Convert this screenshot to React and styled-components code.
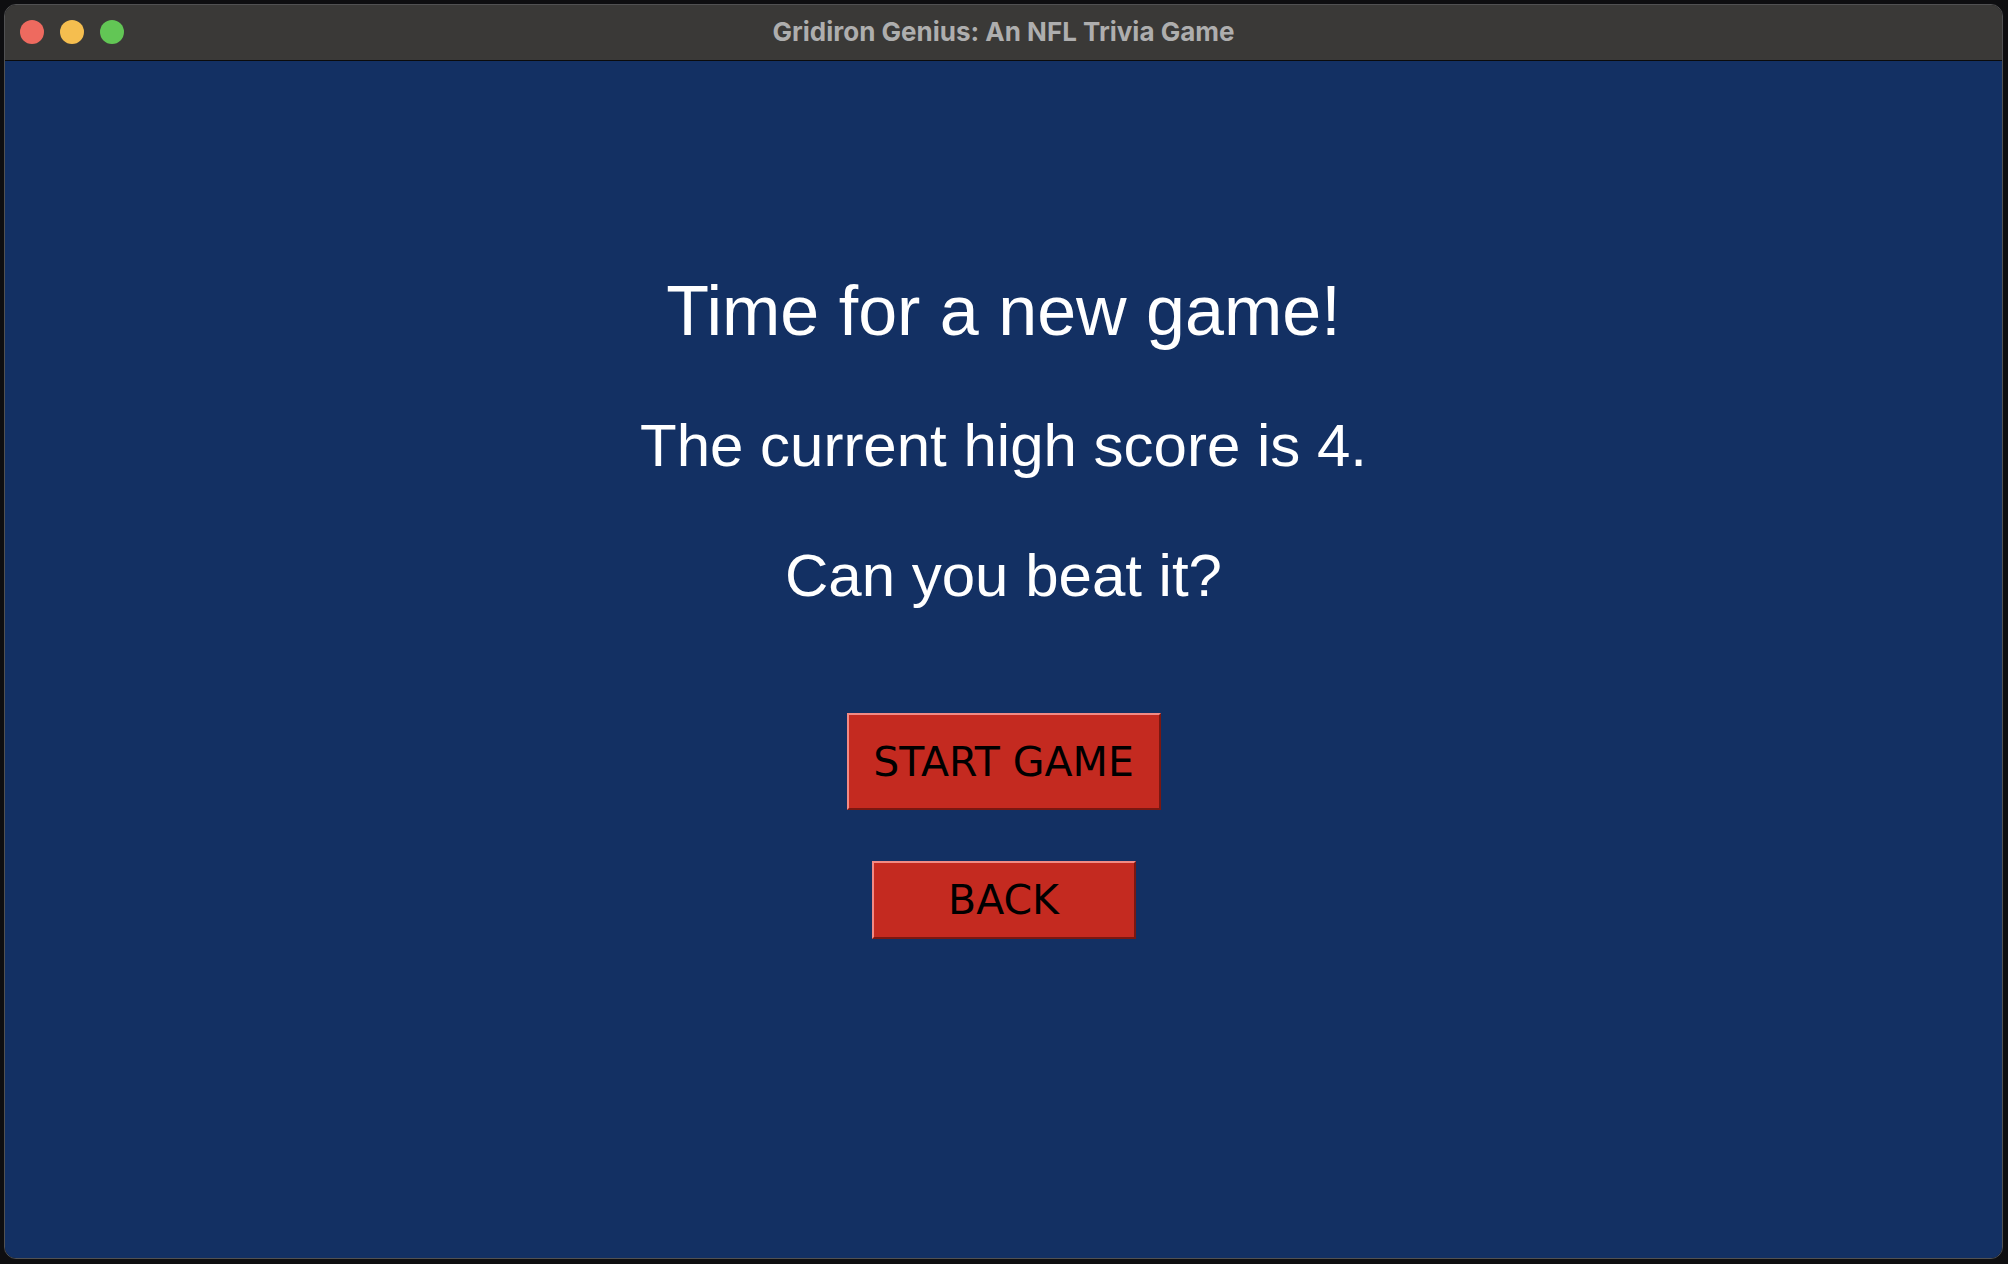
import React from 'react';
import styled, { createGlobalStyle } from 'styled-components';

const GlobalStyle = createGlobalStyle`
  html, body {
    margin: 0;
    padding: 0;
    background: #0e0e10;
  }
  body {
    width: 2008px;
    height: 1264px;
    overflow: hidden;
  }
`;

const Screen = styled.div`
  box-sizing: border-box;
  width: 2008px;
  height: 1264px;
  padding: 4px 5px 5px 4px;
`;

const Window = styled.div`
  box-sizing: border-box;
  height: 100%;
  display: flex;
  flex-direction: column;
  border: 1px solid rgba(255, 255, 255, 0.28);
  border-radius: 12px;
  overflow: hidden;
`;

const TitleBar = styled.div`
  position: relative;
  height: 55px;
  flex: none;
  display: flex;
  align-items: center;
  justify-content: center;
  background: #3a3937;
  border-bottom: 1px solid #0b0b0b;
`;

const Lights = styled.div`
  position: absolute;
  left: 15px;
  top: 15px;
  display: flex;
  gap: 16px;
`;

const Light = styled.span`
  width: 24px;
  height: 24px;
  border-radius: 50%;
  background: ${(p) => p.color};
`;

const Title = styled.div`
  font-family: Inter, 'Noto Sans', sans-serif;
  font-weight: 700;
  font-size: 26px;
  color: #aeaeae;
  margin-top: -2px;
`;

const Content = styled.main`
  flex: 1;
  background: #133063;
  display: flex;
  flex-direction: column;
  align-items: center;
  padding-top: 215px;
`;

const Heading = styled.h1`
  margin: 0;
  font-family: 'Liberation Sans', Arial, sans-serif;
  font-weight: 400;
  font-size: 70px;
  line-height: 70px;
  color: #ffffff;
`;

const Line = styled.p`
  margin: ${(p) => p.top}px 0 0;
  font-family: 'Liberation Sans', Arial, sans-serif;
  font-size: 60px;
  line-height: 60px;
  color: #ffffff;
`;

const Button = styled.button`
  box-sizing: border-box;
  width: ${(p) => p.w}px;
  height: ${(p) => p.h}px;
  margin-top: ${(p) => p.top}px;
  padding: 0;
  background: #c42a20;
  border: 2px solid;
  border-color: #f28a84 #7a1711 #7a1711 #f28a84;
  font-family: 'DejaVu Sans', Verdana, sans-serif;
  font-size: 41px;
  color: #000000;
  cursor: pointer;
`;

export default function App() {
  return (
    <>
      <GlobalStyle />
      <Screen>
        <Window>
          <TitleBar>
            <Lights>
              <Light color="#ee6a5f" />
              <Light color="#f5be4f" />
              <Light color="#62c655" />
            </Lights>
            <Title>Gridiron Genius: An NFL Trivia Game</Title>
          </TitleBar>
          <Content>
            <Heading>Time for a new game!</Heading>
            <Line top={70}>The current high score is 4.</Line>
            <Line top={70}>Can you beat it?</Line>
            <Button w={314} h={97} top={107}>START GAME</Button>
            <Button w={264} h={78} top={51}>BACK</Button>
          </Content>
        </Window>
      </Screen>
    </>
  );
}
